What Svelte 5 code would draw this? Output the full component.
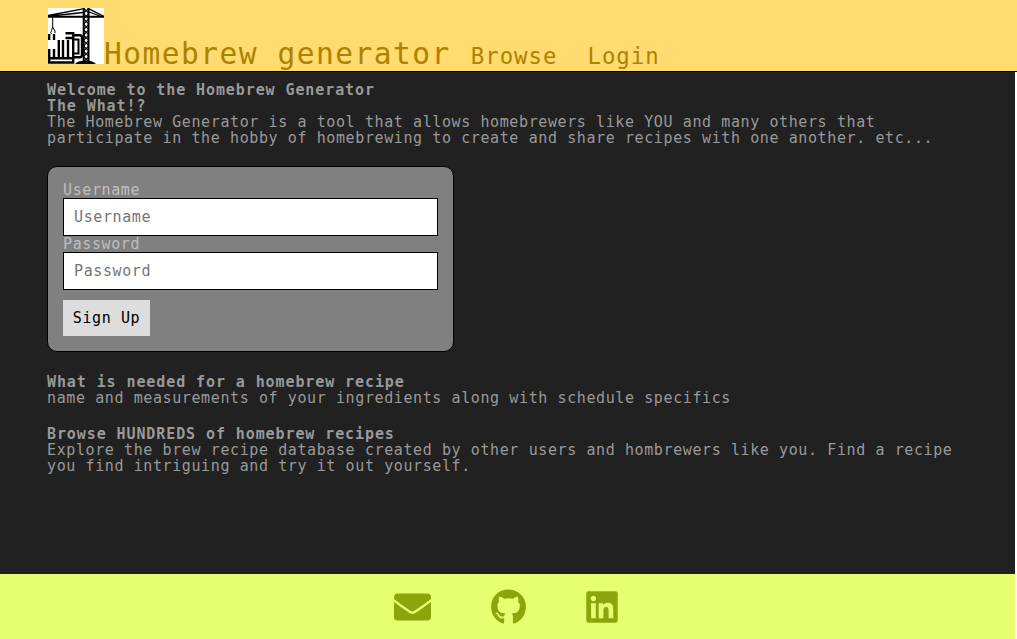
<script>
  const braces = [0, 1, 2, 3, 4, 5, 6, 7, 8, 9];
</script>

<div class="page">
  <header>
    <a class="brand" href="#home">
      <svg class="logo" viewBox="0 0 56 56" aria-label="Homebrew generator logo">
        <rect width="56" height="56" fill="#fff" />
        <g fill="none" stroke="#000">
          <path d="M0 8.8H56" stroke-width="1.9" />
          <path d="M0 7.5L35 .8M3 8L35 4.5M41 .8L56 8.5M41 4L52 8" stroke-width="1.3" />
          <path d="M4.7 9V19L3.6 22.5Q2 25 3.5 26M4.7 19L7 23V25" stroke-width="1" />
          <path d="M35.7 0V54M40.5 0V54" stroke-width="2" />
          {#each braces as i}
            <path d="M35.5 {i * 5.4}L41 {i * 5.4 + 5.4}M41 {i * 5.4}L35.5 {i * 5.4 + 5.4}" stroke-width="1.1" />
          {/each}
          <path d="M1.2 26V32M6 26V32" stroke-width="2.4" />
          <path d="M1.2 41V55M6 41V50M10.8 32V50M15 32V50M20 32V50" stroke-width="2.4" />
          <path d="M17.500 25.200H25.200V54.500H0M17.500 30H25M0 50.200H25" stroke-width="2.4" />
          <path d="M26 27.2H32Q34 27.2 34 29.500V47Q34 49.200 32 49.200H26" stroke-width="2.4" />
          <path d="M26 31.5H30.500V45.500H26" stroke-width="2" />
        </g>
        <path d="M27 56Q30 52.5 35 53Q43 51 48 56Z" />
      </svg>
      <span>Homebrew generator</span>
    </a>
    <nav><a href="#browse">Browse</a><a href="#login">Login</a></nav>
  </header>

  <main>
    <section>
      <h2>Welcome to the Homebrew Generator</h2>
      <h2>The What!?</h2>
      <p>The Homebrew Generator is a tool that allows homebrewers like YOU and many others that participate in the hobby of homebrewing to create and share recipes with one another. etc...</p>
    </section>

    <form>
      <label for="username">Username</label>
      <input id="username" placeholder="Username" />
      <label for="password">Password</label>
      <input id="password" type="password" placeholder="Password" />
      <button type="button">Sign Up</button>
    </form>

    <section>
      <h2>What is needed for a homebrew recipe</h2>
      <p>name and measurements of your ingredients along with schedule specifics</p>
    </section>

    <section>
      <h2>Browse HUNDREDS of homebrew recipes</h2>
      <p>Explore the brew recipe database created by other users and hombrewers like you. Find a recipe you find intriguing and try it out yourself.</p>
    </section>
  </main>

  <footer>
    <a href="#email" aria-label="Email">
      <svg width="37" height="36" viewBox="0 0 512 512" preserveAspectRatio="none"><path d="M502.3 190.8c3.9-3.1 9.7-.2 9.7 4.7V400c0 26.5-21.5 48-48 48H48c-26.5 0-48-21.5-48-48V195.6c0-5 5.7-7.8 9.7-4.7 22.4 17.4 52.1 39.5 154.1 113.6 21.1 15.4 56.7 47.8 92.2 47.6 35.7.3 72-32.8 92.3-47.6 102-74.1 131.6-96.3 154-113.7zM256 320c23.2.4 56.6-29.2 73.4-41.4 132.7-96.3 142.8-104.7 173.4-128.7 5.8-4.5 9.2-11.5 9.2-18.9v-19c0-26.5-21.5-48-48-48H48c-26.5 0-48 21.5-48 48v19c0 7.4 3.4 14.3 9.2 18.9 30.6 23.9 40.7 32.4 173.4 128.7 16.8 12.2 50.2 41.8 73.4 41.4z" /></svg>
    </a>
    <a href="#github" aria-label="GitHub">
      <svg width="35" height="36" viewBox="0 0 496 512"><path d="M165.9 397.4c0 2-2.3 3.6-5.2 3.6-3.3.3-5.6-1.3-5.6-3.6 0-2 2.3-3.6 5.2-3.6 3-.3 5.6 1.3 5.6 3.6zm-31.1-4.5c-.7 2 1.3 4.3 4.3 4.9 2.6 1 5.6 0 6.2-2s-1.3-4.3-4.3-5.2c-2.6-.7-5.5.3-6.2 2.3zm44.2-1.7c-2.9.7-4.9 2.6-4.6 4.9.3 2 2.9 3.3 5.9 2.6 2.9-.7 4.9-2.6 4.6-4.6-.3-1.9-3-3.2-5.9-2.9zM244.8 8C106.1 8 0 113.3 0 252c0 110.9 69.8 205.8 169.5 239.2 12.8 2.3 17.3-5.6 17.3-12.1 0-6.2-.3-40.4-.3-61.4 0 0-70 15-84.7-29.8 0 0-11.4-29.1-27.8-36.6 0 0-22.9-15.7 1.6-15.4 0 0 24.9 2 38.6 25.8 21.9 38.6 58.6 27.5 72.9 20.9 2.3-16 8.8-27.1 16-33.7-55.9-6.2-112.3-14.3-112.3-110.5 0-27.5 7.6-41.3 23.6-58.9-2.6-6.5-11.1-33.3 2.6-67.9 20.9-6.5 69 27 69 27 20-5.600 41.5-8.5 62.8-8.500s42.8 2.9 62.8 8.500c0 0 48.1-33.6 69-27 13.7 34.7 5.2 61.4 2.6 67.9 16 17.7 25.8 31.5 25.8 58.9 0 96.5-58.9 104.2-114.8 110.5 9.2 7.9 17 22.9 17 46.4 0 33.7-.3 75.4-.3 83.6 0 6.5 4.6 14.4 17.3 12.1C428.2 457.8 496 362.9 496 252 496 113.3 383.5 8 244.8 8z" /></svg>
    </a>
    <a href="#linkedin" aria-label="LinkedIn">
      <svg width="32" height="36" viewBox="0 0 448 512"><path d="M416 32H31.9C14.3 32 0 46.5 0 64.3v383.4C0 465.5 14.3 480 31.9 480H416c17.6 0 32-14.5 32-32.3V64.3c0-17.8-14.4-32.3-32-32.3zM135.4 416H69V202.2h66.5V416zm-33.2-243c-21.3 0-38.5-17.3-38.5-38.5S80.9 96 102.2 96c21.2 0 38.5 17.3 38.5 38.5 0 21.3-17.2 38.5-38.5 38.5zm282.1 243h-66.4V312c0-24.8-.5-56.7-34.5-56.7-34.6 0-39.9 27-39.9 54.9V416h-66.4V202.2h63.7v29.2h.9c8.9-16.8 30.6-34.5 62.9-34.5 67.2 0 79.7 44.3 79.7 101.9V416z" /></svg>
    </a>
  </footer>
</div>

<style>
  :global(body) { margin: 0; background: #fff; }
  .page, .page * { box-sizing: border-box; }
  .page {
    display: flex;
    flex-direction: column;
    height: 639px;
    font: 15px/16px "DejaVu Sans Mono", monospace;
    letter-spacing: .602px;
    color: #999;
    overflow: hidden;
  }
  a { color: inherit; text-decoration: none; }
  header {
    display: flex;
    align-items: baseline;
    height: 72px;
    flex: none;
    padding: 8px 0 0 48px;
    background: #ffdb70;
    border-bottom: 1px solid #000;
    color: #ad8200;
  }
  .brand { display: flex; align-items: flex-end; font-size: 29.5px; line-height: 32px; letter-spacing: 1.505px; white-space: nowrap; }
  .brand span { margin-bottom: -6px; }
  .logo { width: 56px; height: 56px; }
  nav { display: flex; gap: 30px; margin-left: 20px; font-size: 22.3px; line-height: 24px; letter-spacing: 1.02px; }
  main { flex: 1; width: 1015px; padding: 10px 47px 0; background: #212121; }
  h2, p { margin: 0; font-size: 15px; line-height: 16px; }
  h2 { letter-spacing: .905px; }
  form {
    display: flex;
    flex-direction: column;
    align-items: flex-start;
    width: 407px;
    height: 186px;
    margin: 20px 0 22px;
    padding: 15px;
    background: #808080;
    border: 1px solid #000;
    border-radius: 10px;
    color: #bfbfbf;
  }
  section + section { margin-top: 20px; }
  input {
    width: 375px;
    height: 38px;
    padding: 0 10px;
    border: 1px solid #000;
    background: #fff;
    font: inherit;
    letter-spacing: inherit;
  }
  input::placeholder { color: #757575; opacity: 1; }
  button {
    width: 87px;
    height: 36px;
    margin-top: 10px;
    padding: 0;
    border: 0;
    background: #ddd;
    color: #000;
    font: inherit;
    letter-spacing: inherit;
  }
  footer {
    display: flex;
    align-items: center;
    justify-content: center;
    gap: 60px;
    width: 1015px;
    height: 65px;
    flex: none;
    padding: 1px 3px 0 0;
    background: #e5ff70;
  }
  footer svg { display: block; fill: #8aa60d; }
</style>
